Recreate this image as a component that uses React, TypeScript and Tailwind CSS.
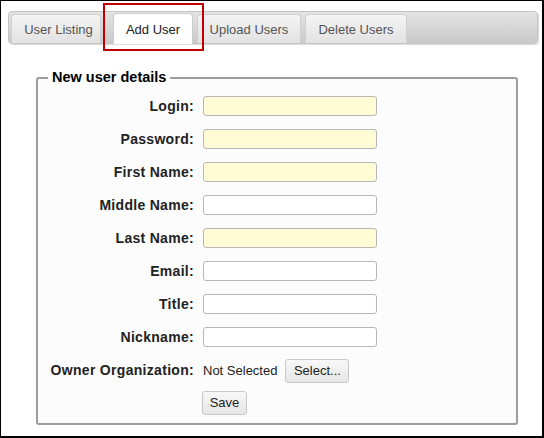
import React from "react";

const tabs = [
  { label: "User Listing", w: "w-[90px]", ml: "ml-[2px]", pad: "pl-[5px]" },
  { label: "Add User", w: "w-[80px]", ml: "ml-[12px]", pad: "", active: true },
  { label: "Upload Users", w: "w-[104px]", ml: "ml-[4px]", pad: "" },
  { label: "Delete Users", w: "w-[102px]", ml: "ml-[4px]", pad: "" },
];

const fields = [
  { label: "Login:", required: true },
  { label: "Password:", required: true },
  { label: "First Name:", required: true },
  { label: "Middle Name:" },
  { label: "Last Name:", required: true },
  { label: "Email:" },
  { label: "Title:" },
  { label: "Nickname:" },
];

function Button({ children, w }: { children: React.ReactNode; w: string }) {
  return (
    <button
      className={`${w} h-[24px] rounded-[3px] border border-[#c8c8c8] bg-gradient-to-b from-[#f8f8f8] to-[#e6e6e6] text-[13px] text-[#222]`}
    >
      {children}
    </button>
  );
}

export default function App() {
  return (
    <div className="h-[438px] w-[544px] border-t border-l border-r-2 border-b-2 border-black bg-white pt-[10px] pl-[7px] font-['Liberation_Sans',Arial,sans-serif]">
      {/* tab strip */}
      <div className="flex h-[33px] w-[530px] items-end rounded-[4px] border border-[#c4c4c4] bg-gradient-to-b from-[#e4e4e4] to-[#c9c9c9] shadow-[1px_1px_1px_rgba(0,0,0,0.15)]">
        {tabs.map((t) =>
          t.active ? (
            <div
              key={t.label}
              className={`relative ${t.ml} ${t.w} -mb-px flex h-[31px] items-center justify-center rounded-t-[4px] border border-b-0 border-[#cccccc] bg-white pt-[2px] text-[13px] text-[#212121]`}
            >
              {t.label}
              <div className="absolute -top-[11px] -right-[12px] -bottom-[7px] -left-[11px] border-2 border-[#c00000]" />
            </div>
          ) : (
            <div
              key={t.label}
              className={`${t.ml} ${t.w} ${t.pad} flex h-[29px] items-center justify-center rounded-t-[4px] border border-b-0 border-[#d0d0d0] bg-gradient-to-b from-[#f4f4f4] to-[#e2e2e2] pt-[2px] text-[13px] text-[#555]`}
            >
              {t.label}
            </div>
          )
        )}
      </div>

      {/* form */}
      <fieldset className="mt-[23px] ml-[28px] w-[482px] rounded-[3px] border-2 border-[#9d9d9d] bg-[#fcfcfc] pr-[10px] pb-[8px] pl-[10px]">
        <legend className="px-[4px] text-[14.5px] font-bold text-black">New user details</legend>
        <div className="flex flex-col pt-px">
          {fields.map((f) => (
            <div key={f.label} className="flex h-[33px] items-center">
              <label className="w-[146px] text-right text-[14px] font-bold tracking-[0.3px] text-[#222]">
                {f.label}
              </label>
              <input
                className={`ml-[9px] h-[20px] w-[174px] rounded-[3px] border border-[#b8b8b8] ${
                  f.required ? "bg-[#fffcd5]" : "bg-white"
                }`}
              />
            </div>
          ))}
          <div className="flex h-[33px] items-center">
            <label className="w-[146px] text-right text-[14px] font-bold tracking-[0.3px] text-[#222]">
              Owner Organization:
            </label>
            <span className="ml-[9px] text-[13px] text-[#222]">Not Selected</span>
            <span className="ml-[8px]">
              <Button w="w-[64px]">Select...</Button>
            </span>
          </div>
          <div className="mt-[3px] flex">
            <span className="ml-[154px]">
              <Button w="w-[45px]">Save</Button>
            </span>
          </div>
        </div>
      </fieldset>
    </div>
  );
}
